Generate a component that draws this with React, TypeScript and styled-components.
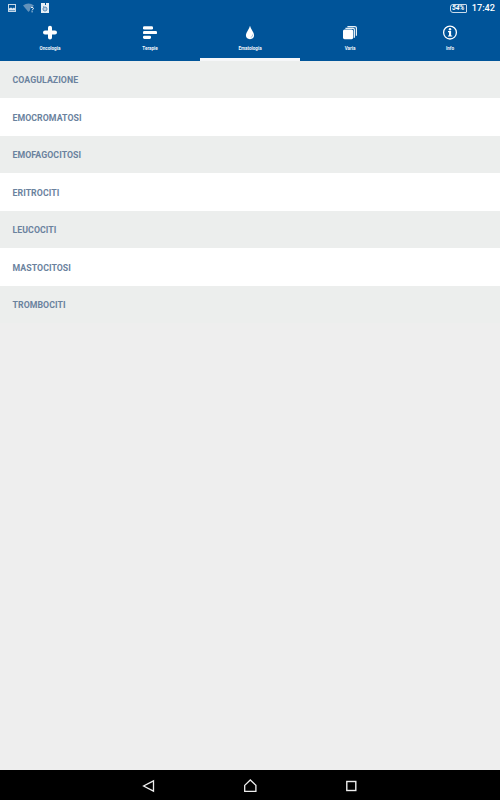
import React from "react";
import styled, { createGlobalStyle } from "styled-components";

const GlobalStyle = createGlobalStyle`
  * { box-sizing: border-box; }
  body { margin: 0; font-family: Roboto, "Liberation Sans", sans-serif; }
  svg { display: block; flex: none; }
`;

const Screen = styled.div`
  width: 500px;
  height: 800px;
  display: flex;
  flex-direction: column;
  background: #eeeeee;
  overflow: hidden;
`;

const StatusBar = styled.header`
  height: 16px;
  flex: none;
  display: flex;
  align-items: center;
  justify-content: space-between;
  padding: 0 5px 0 8px;
  background: #005499;
  color: #fff;
`;

const StatusGroup = styled.div<{ $gap: number }>`
  display: flex;
  align-items: center;
  gap: ${(p) => p.$gap}px;
`;

const Battery = styled.div`
  width: 17px;
  height: 9px;
  display: flex;
  align-items: center;
  justify-content: center;
  padding-top: 1px;
  border: 1px solid #cbdceb;
  border-radius: 3px 1px 1px 3px;
  font-size: 6.8px;
  line-height: 7px;
  font-weight: 700;
  font-style: italic;
  letter-spacing: -0.1px;
`;

const Clock = styled.time`
  font-size: 9.2px;
  line-height: 16px;
  font-weight: 500;
`;

const TabBar = styled.nav`
  height: 45px;
  flex: none;
  display: grid;
  grid-template-columns: repeat(5, 1fr);
  background: #005499;
`;

const Tab = styled.button<{ $active: boolean }>`
  display: flex;
  flex-direction: column;
  align-items: center;
  justify-content: flex-start;
  gap: 5px;
  padding: 9px 0 0;
  border: 0;
  border-bottom: 3px solid ${(p) => (p.$active ? "#f6f7f9" : "#005499")};
  background: none;
  color: #f0f5fa;
  font-family: inherit;
`;

const TabLabel = styled.span`
  font-size: 4.6px;
  line-height: 6px;
  font-weight: 700;
`;

const List = styled.main`
  flex: 1;
`;

const Row = styled.div<{ $shaded: boolean }>`
  height: 37.5px;
  display: flex;
  align-items: center;
  padding: 1.6px 12.5px 0;
  background: ${(p) => (p.$shaded ? "#eceeed" : "#ffffff")};
  color: #6a829e;
  font-size: 8.75px;
  font-weight: 700;
  letter-spacing: 0.06px;

  &:first-child { height: 37.3px; }
`;

const NavBar = styled.footer`
  height: 30px;
  flex: none;
  display: flex;
  align-items: center;
  justify-content: center;
  gap: 87px;
  padding-top: 2px;
  background: #000;
`;

const PictureIcon = () => (
  <svg width="8" height="8" viewBox="0 0 8 8">
    <rect x=".5" y=".5" width="7" height="7" fill="none" stroke="#c5d7e7" />
    <path d="M1 6.5V4.5l2-1 1.5 1L6 3.5l1 1v2z" fill="#d9e6f1" />
  </svg>
);

const WifiIcon = () => (
  <svg width="11" height="10" viewBox="0 0 11 10">
    <path d="M0 2.5Q5.5-1.5 11 2.5L5.5 9z" fill="#6292bb" />
    <path d="M7 4.5h4V10H7z" fill="#005499" />
    <path d="M7.7 5.2c.2-1.2 2.7-1.1 2.7.2 0 1-1.3 1-1.3 2M9.1 8.3v1" fill="none" stroke="#fff" />
  </svg>
);

const CardIcon = () => (
  <svg width="8" height="10" viewBox="0 0 8 10">
    <path d="M0 0h4v2h1V0h3v10H0z" fill="#e8f0f6" />
    <circle cx="4" cy="6" r="2" fill="none" stroke="#4e82b0" strokeWidth="1" />
    <path d="M4 5v2M2 3l1 1" stroke="#4e82b0" strokeWidth=".6" />
  </svg>
);

const PlusIcon = () => (
  <svg width="16" height="16" viewBox="0 0 16 16">
    <path d="M8 2.8v9.6M3 7.6h10" stroke="#fff" strokeWidth="4" strokeLinecap="round" />
  </svg>
);

const BarsIcon = () => (
  <svg width="16" height="16" viewBox="0 0 16 16">
    <rect x="1" y="1.3" width="10" height="3.2" rx="1.3" fill="#fff" />
    <rect x="1" y="6.1" width="14" height="3" rx="1.2" fill="#fff" />
    <rect x="1" y="10.7" width="8" height="3.2" rx="1.3" fill="#fff" />
  </svg>
);

const DropIcon = () => (
  <svg width="16" height="16" viewBox="0 0 16 16">
    <path d="M8 .8Q8.6 3.2 10.6 6.2Q12.1 8.4 12.1 10.1A4.1 4.1 0 0 1 3.9 10.1Q3.9 8.4 5.4 6.2Q7.4 3.2 8 .8z" fill="#fff" />
    <path d="M10.8 9.4Q10.7 11.8 8.7 12.5" fill="none" stroke="#5288b6" strokeWidth=".5" />
  </svg>
);

const StackIcon = () => (
  <svg width="16" height="16" viewBox="0 0 16 16">
    <path d="M5.4 1.6H13a1.4 1.4 0 0 1 1.4 1.4v7.8M3.4 3.4H11a1.4 1.4 0 0 1 1.4 1.4v7.9" fill="none" stroke="#e8f0f6" strokeWidth="1.2" />
    <rect x="1" y="4.5" width="10.2" height="9.7" rx="1.6" fill="#fff" />
  </svg>
);

const InfoIcon = () => (
  <svg width="16" height="16" viewBox="0 0 16 16">
    <circle cx="8" cy="7.6" r="6.4" fill="none" stroke="#fff" strokeWidth="1.3" />
    <circle cx="8" cy="4.3" r="1.2" fill="#fff" />
    <path d="M6 6.1h3.1v4.3h1.1v1.1H6v-1.1h1V7.2H6z" fill="#fff" />
  </svg>
);

const tabs = [
  { label: "Oncologia", icon: <PlusIcon /> },
  { label: "Terapie", icon: <BarsIcon /> },
  { label: "Ematologia", icon: <DropIcon /> },
  { label: "Varia", icon: <StackIcon /> },
  { label: "Info", icon: <InfoIcon /> },
];

const rows = ["COAGULAZIONE", "EMOCROMATOSI", "EMOFAGOCITOSI", "ERITROCITI", "LEUCOCITI", "MASTOCITOSI", "TROMBOCITI"];

export default function App() {
  return (
    <Screen>
      <GlobalStyle />
      <StatusBar>
        <StatusGroup $gap={7}>
          <PictureIcon />
          <WifiIcon />
          <CardIcon />
        </StatusGroup>
        <StatusGroup $gap={5}>
          <Battery>54%</Battery>
          <Clock>17:42</Clock>
        </StatusGroup>
      </StatusBar>
      <TabBar>
        {tabs.map((tab) => (
          <Tab key={tab.label} $active={tab.label === "Ematologia"}>
            {tab.icon}
            <TabLabel>{tab.label}</TabLabel>
          </Tab>
        ))}
      </TabBar>
      <List>
        {rows.map((name, i) => (
          <Row key={name} $shaded={i % 2 === 0}>{name}</Row>
        ))}
      </List>
      <NavBar>
        <svg width="14" height="14" viewBox="0 0 14 14">
          <path d="M11.5 1.8v10.4L1.6 7z" fill="none" stroke="#eee" strokeWidth="1.3" />
        </svg>
        <svg width="14" height="14" viewBox="0 0 14 14">
          <path d="M1.7 6.4L7.3 1l5.6 5.4v6H1.7z" fill="none" stroke="#eee" strokeWidth="1.3" />
        </svg>
        <svg width="14" height="14" viewBox="0 0 14 14">
          <rect x="2.8" y="2.5" width="9" height="9" fill="none" stroke="#eee" strokeWidth="1.4" />
        </svg>
      </NavBar>
    </Screen>
  );
}
